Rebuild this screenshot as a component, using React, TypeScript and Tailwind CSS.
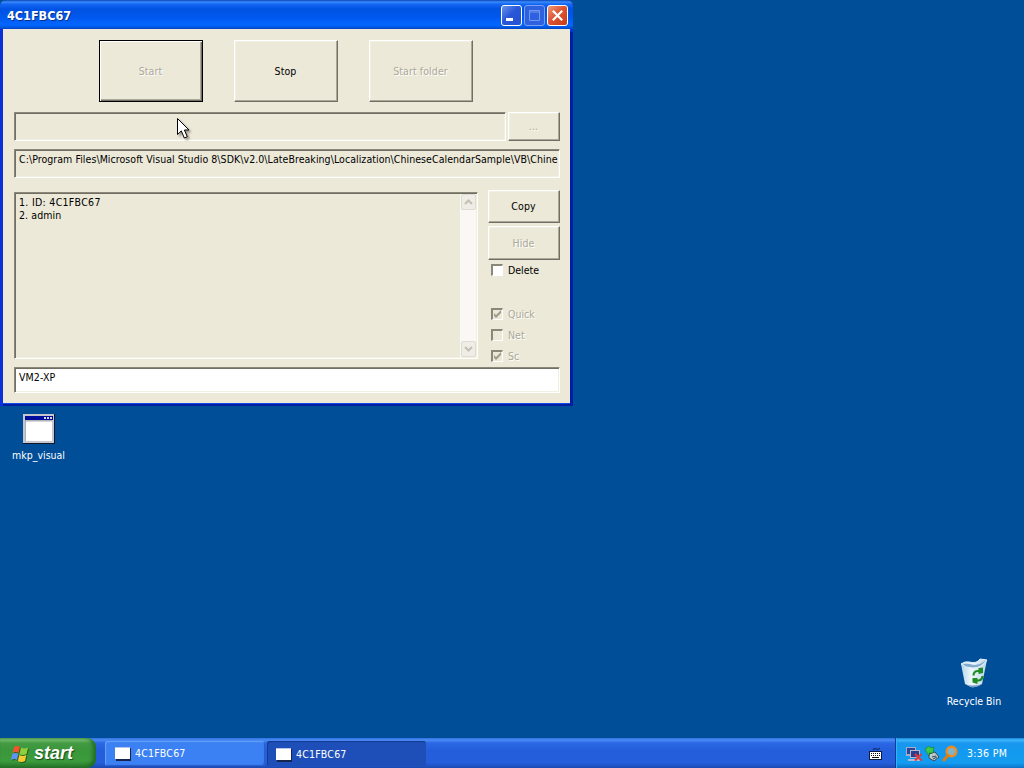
import React from 'react';
import clsx from 'clsx';

const raised = 'border border-t-white border-l-white border-r-[#716f64] border-b-[#716f64] shadow-[inset_-1px_-1px_0_#aca899,inset_1px_1px_0_#f1efe2]';
const sunken = 'border border-t-[#8b887a] border-l-[#8b887a] border-r-white border-b-white shadow-[inset_1px_1px_0_#716f64,inset_-1px_-1px_0_#f1efe2]';
const disabledText = 'text-[#aca899] [text-shadow:1px_1px_0_#fff]';

interface ButtonProps {
  label: string;
  className: string;
  disabled?: boolean;
  focused?: boolean;
}

const Button: React.FC<ButtonProps> = ({ label, className, disabled, focused }) => (
  <button
    disabled={disabled}
    className={clsx(
      'shrink-0 flex items-center justify-center bg-[#ece9d8] pr-px pt-px tracking-[0.1px]',
      focused
        ? 'border border-black shadow-[inset_1px_1px_0_#fff,inset_-1px_-1px_0_#716f64,inset_-2px_-2px_0_#aca899]'
        : raised,
      disabled && disabledText,
      className
    )}
  >
    {label}
  </button>
);

interface CheckProps {
  label: string;
  checked?: boolean;
  disabled?: boolean;
}

const Check: React.FC<CheckProps> = ({ label, checked, disabled }) => (
  <label className="flex items-center gap-[5px] h-[21px] pl-[3px]">
    <span
      className={clsx(
        'w-[12px] h-[12px] mb-[2px] shrink-0 border-t-2 border-l-2 border-b border-r border-t-[#8b887a] border-l-[#8b887a] border-b-white border-r-white',
        disabled ? 'bg-[#ece9d8]' : 'bg-white'
      )}
    >
      {checked && (
        <svg viewBox="0 0 9 9" className="w-[9px] h-[9px]">
          <path d="M1 3v3l2 2 5-5V0L3 5z" fill="#a09d8e" />
        </svg>
      )}
    </span>
    <span className={clsx(disabled && disabledText)}>{label}</span>
  </label>
);

const ScrollArrow = ({ down }: { down?: boolean }) => (
  <span className="w-[15px] h-[16px] rounded-[2px] border border-[#dedccf] bg-[#efeee6] flex items-center justify-center">
    <svg viewBox="0 0 9 6" className={clsx('w-[9px] h-[6px]', down && 'rotate-180')}>
      <path d="M1 5l3.5-3.5L8 5" fill="none" stroke="#c3c0b2" strokeWidth="2" />
    </svg>
  </span>
);

const TitleBar = () => (
  <div className="h-[29px] shrink-0 flex items-center pl-[7px] pr-[5px] pt-[2px] rounded-t-[6px] bg-[linear-gradient(180deg,#0843b8_0px,#3b8dfa_2px,#1667f4_4px,#0053e2_9px,#0058ee_17px,#0367ff_25px,#0151d8_28px,#0140bd_29px)]">
    <span className="flex-1 pt-[2px] text-white text-[12.5px] font-bold [text-shadow:1px_1px_0_#0a2f87]">4C1FBC67</span>
    <div className="flex gap-[2px]">
      <span className="w-[21px] h-[21px] rounded-[3px] border border-white bg-[linear-gradient(135deg,#6b92ed,#2858d8_45%,#2353d4)]">
        <svg viewBox="0 0 19 19">
          <path d="M4 12h7v3H4z" fill="#fff" />
        </svg>
      </span>
      <span className="w-[21px] h-[21px] rounded-[3px] border border-[#7e9fec] bg-[#2d61df]">
        <svg viewBox="0 0 19 19">
          <path d="M4.5 4.5h10v10h-10zM4 6h11" fill="none" stroke="#7298ee" />
        </svg>
      </span>
      <span className="w-[21px] h-[21px] rounded-[3px] border border-white bg-[linear-gradient(135deg,#ee9a7b,#dd5532_45%,#c63b18)]">
        <svg viewBox="0 0 19 19">
          <path d="M4.8 4.8l9.4 9.4M14.2 4.8l-9.4 9.4" stroke="#fff" strokeWidth="2.2" />
        </svg>
      </span>
    </div>
  </div>
);

const AppWindow = () => (
  <div className="absolute left-0 top-0 w-[573px] h-[406px] flex flex-col rounded-t-[7px] bg-[#0831d9]">
    <TitleBar />
    <div className="flex-1 mx-[3px] mb-[3px] bg-[#ece9d8] pl-[11px] pr-[10px] pt-[11px] shadow-[0_1px_0_#1148e8,0_3px_0_#001ea0,3px_3px_0_#001ea0]">
      <div className="flex gap-[31px] pl-[85px]">
        <Button label="Start" className="w-[104px] h-[62px]" disabled focused />
        <Button label="Stop" className="w-[104px] h-[62px]" />
        <Button label="Start folder" className="w-[104px] h-[62px]" disabled />
      </div>

      <div className="flex gap-[2px] mt-[10px]">
        <div className={clsx('w-[492px] h-[29px]', sunken)} />
        <Button label="..." className="w-[52px] h-[29px]" disabled />
      </div>

      <div className={clsx('mt-[8px] h-[29px] pl-[4px] pr-px pt-[2px] leading-[15px]', sunken)}>
        <div className="overflow-hidden whitespace-nowrap tracking-[0.06px]">
          C:\Program Files\Microsoft Visual Studio 8\SDK\v2.0\LateBreaking\Localization\ChineseCalendarSample\VB\Chine
        </div>
      </div>

      <div className="flex mt-[12px] h-[170px]">
        <div className={clsx('mt-[2px] w-[464px] h-[167px] flex p-px', sunken)}>
          <div className="flex-1 pl-[3px] pt-[2px] leading-[13px]">
            <p className="tracking-[0.3px]">1. ID: 4C1FBC67</p>
            <p className="tracking-[0.1px]">2. admin</p>
          </div>
          <div className="w-[16px] flex flex-col items-center justify-between bg-[#f9f8f4]">
            <ScrollArrow />
            <ScrollArrow down />
          </div>
        </div>
        <div className="flex-1 pl-[10px]">
          <Button label="Copy" className="w-[72px] h-[33px]" />
          <Button label="Hide" className="w-[72px] h-[34px] mt-[3px]" disabled />
          <Check label="Delete" />
          <div className="mt-[23px]">
            <Check label="Quick" checked disabled />
            <Check label="Net" disabled />
            <Check label="Sc" checked disabled />
          </div>
        </div>
      </div>

      <div className={clsx('mt-[7px] h-[26px] pl-[4px] pt-[2px] bg-white leading-[15px] tracking-[0.1px]', sunken)}>VM2-XP</div>
    </div>
  </div>
);

const Cursor = () => (
  <svg viewBox="0 0 14 22" className="absolute left-[177px] top-[118px] w-[14px] h-[22px] drop-shadow-[2px_2px_1px_rgba(0,0,0,0.35)]">
    <path d="M.5.5v16l3.8-3.6L7.3 20l3-1.3L7.4 12H12z" fill="#fff" stroke="#000" />
  </svg>
);

const ProgramIcon = () => (
  <svg viewBox="0 0 32 30" className="w-[32px] h-[30px]">
    <path d="M0 0h31v29H0z" fill="#c6c6cf" />
    <path d="M31 0h1v30H0v-1h31z" fill="#101828" />
    <path d="M2 2h28v4H2z" fill="#000c9c" />
    <path d="M21 3h2v2h-2zM24 3h2v2h-2zM27 3h2v2h-2z" fill="#d8d8e0" />
    <path d="M2 7h27v20H2z" fill="#fff" />
    <path d="M2 7h27M2.5 7v20" stroke="#888c9c" strokeWidth=".7" />
  </svg>
);

const RecycleBinIcon = () => (
  <svg viewBox="0 0 28 30" className="w-[28px] h-[30px]">
    <defs>
      <linearGradient id="bin" x1="0" x2="1">
        <stop offset="0" stopColor="#b4d6e8" />
        <stop offset=".4" stopColor="#eef8fb" />
        <stop offset="1" stopColor="#b9d4e8" />
      </linearGradient>
    </defs>
    <path d="M1 6Q5 3 9 4q8 2 11-3l7 1-5 24q-5 4-11 3l-6-3z" fill="url(#bin)" />
    <path d="M2 7q4-2 8-1 8 3 16-4-5 8-13 8Q5 10 2 7z" fill="#83acd0" />
    <path d="M1 6Q5 3 9 4q8 2 11-3l7 1q-5 8-14 8Q5 10 1 6z" fill="none" stroke="#e6f4fa" strokeWidth="1" />
    <path d="M5 26q7 3 17 0-5 4-11 3z" fill="#7499bd" />
    <g fill="none" stroke="#218c24" strokeWidth="2.2">
      <path d="M13.500 17.500q0-4 4-4.500h2" />
      <path d="M22.500 18q0 4-4 4.500h-2" />
    </g>
    <path d="M18.500 10v6l4.500-1V9.500zM17.500 20v6l-5-1.500V20z" fill="#218c24" />
  </svg>
);

const WindowsFlag = () => (
  <svg viewBox="0 0 18 18" className="w-[18px] h-[18px] drop-shadow-[1px_1px_0_rgba(0,0,0,0.35)]">
    <path d="M3 2q3-2 6 0L7.5 8q-3-2-6 0z" fill="#f0562b" />
    <path d="M10 2.5q3 2 7 0L15.5 9q-4 2-7 0z" fill="#8fd03c" />
    <path d="M1.3 9q3-2 6 0L6 15q-3-2-6 0z" fill="#5f94f5" />
    <path d="M8.3 10q3 2 7 0L14 16q-4 2-7 0z" fill="#fbc930" />
  </svg>
);

const TaskButton = ({ title, active }: { title: string; active?: boolean }) => (
  <div
    className={clsx(
      'h-[25px] flex items-center gap-[4px] rounded-[3px] text-white',
      active
        ? 'w-[159px] pl-[9px] pt-[2px] bg-[#1e4fb9] shadow-[inset_1px_1px_1px_#153a8c]'
        : 'w-[160px] pl-[10px] bg-[#3c81f3] shadow-[inset_1px_1px_1px_#65a0fa,inset_-1px_-1px_1px_#2559c8]'
    )}
  >
    <svg viewBox="0 0 16 14" className="w-[16px] h-[14px]">
      <path d="M1 1h15v13H1z" fill="#15254d" />
      <path d="M0 0h15v12H0z" fill="#fff" />
      <path d="M0 .5h15" stroke="#b5c6ea" />
    </svg>
    <span className="tracking-[0.2px]">{title}</span>
  </div>
);

const Taskbar = () => (
  <div className="h-[30px] shrink-0 flex bg-[linear-gradient(180deg,#2f6fe0_0px,#4a8df5_2px,#2b67e4_5px,#245edb_12px,#245edb_25px,#1c49b0_30px)]">
    <div className="w-[96px] flex items-center gap-[5px] pl-[11px] pt-px rounded-r-[9px] text-white bg-[linear-gradient(180deg,#5eac5b_0px,#75bd6e_2px,#449b43_5px,#3a963b_12px,#3c9c3c_23px,#277a2b_30px)] shadow-[inset_-3px_-1px_4px_#206a26]">
      <WindowsFlag />
      <span className="font-['Liberation_Sans',sans-serif] text-[18px] leading-none font-bold italic pb-[2px] [text-shadow:1px_1px_1px_#174d1b]">start</span>
    </div>
    <div className="flex-1 flex pl-[9px] pt-[3px] gap-[2px]">
      <TaskButton title="4C1FBC67" />
      <TaskButton title="4C1FBC67" active />
    </div>
    <svg viewBox="0 0 13 13" className="w-[13px] h-[13px] mt-[9px] mr-[13px]">
      <path d="M4 3q0-2 3-1t4-1" fill="none" stroke="#0b2055" />
      <path d="M0 4h13v9H0z" fill="#0b1b46" />
      <path d="M1 5h11v7H1z" fill="#fff" />
      <path d="M2 6.5h9M2 8.5h9" stroke="#111" strokeDasharray="1 1" />
      <path d="M3 10.5h7" stroke="#111" />
    </svg>
    <div className="w-[129px] flex items-center pl-[9px] pt-px border-l border-[#0c3c93] text-white bg-[linear-gradient(180deg,#1481dc_0px,#3fb8fa_2px,#1996ee_5px,#129af0_15px,#149cf0_25px,#0d73c8_30px)] shadow-[inset_1px_0_0_#35b5f7]">
      <svg viewBox="0 0 18 16" className="w-[18px] h-[16px]">
        <path d="M1 1h10v9H1z" fill="#a3aecb" />
        <path d="M2 2h8v6H2z" fill="#2e4494" />
        <path d="M5 4h10v8H5zM3 13h12v2H3z" fill="#b0bad4" />
        <path d="M6 5h8v6H6z" fill="#2c3f8c" />
        <path d="M10 8l6.500 6.500M16.500 8L10 14.500" stroke="#e03a3c" strokeWidth="2" />
      </svg>
      <svg viewBox="0 0 17 16" className="w-[17px] h-[16px] ml-px">
        <path d="M5 8l6-2 4 5-5 4-5-3z" fill="#c0cacd" stroke="#334b57" />
        <path d="M8 11l4-1M9 13l4-2" stroke="#33434d" />
        <path d="M1 3l4-3 2 2 3-1-1 6H5v3L3 7z" fill="#3cc94a" stroke="#16772c" strokeWidth=".6" />
      </svg>
      <svg viewBox="0 0 17 17" className="w-[17px] h-[17px]">
        <circle cx="10.5" cy="6.5" r="4.8" fill="#7fb4cc" stroke="#f08c1c" strokeWidth="2.4" />
        <path d="M6.8 10.5L3 15" stroke="#e07c14" strokeWidth="3" strokeLinecap="round" />
      </svg>
      <span className="ml-[9px] tracking-[0.3px]">3:36 PM</span>
    </div>
  </div>
);

export default function App() {
  return (
    <div className="w-[1024px] h-[768px] flex flex-col overflow-hidden bg-[#004e98] font-['DejaVu_Sans_Condensed','DejaVu_Sans',sans-serif] [font-stretch:condensed] text-[10.5px] text-black cursor-default">
      <div className="relative flex-1">
        <AppWindow />
        <div className="absolute left-0 top-[414px] w-[77px] flex flex-col items-center gap-[4px] text-white">
          <ProgramIcon />
          <span className="leading-[14px]">mkp_visual</span>
        </div>
        <div className="absolute left-[935px] top-[658px] w-[78px] flex flex-col items-center gap-[6px] text-white">
          <RecycleBinIcon />
          <span className="leading-[14px]">Recycle Bin</span>
        </div>
        <Cursor />
      </div>
      <Taskbar />
    </div>
  );
}
